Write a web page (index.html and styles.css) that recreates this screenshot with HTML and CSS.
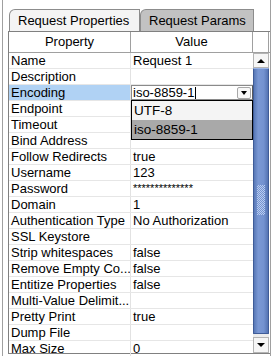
FILE: index.html
```html
<!DOCTYPE html>
<html>
  <head>
    <title>Request Properties</title>
    <link rel="stylesheet" href="styles.css">
  </head>
  <body>
    <div class="panel">
      <div class="tabs">
        <div class="tab active">Request Properties</div>
        <div class="tab">Request Params</div>
      </div>
      <div class="grid">
        <div class="head">
          <div class="hcell">Property</div>
          <div class="hcell">Value</div>
          <div class="hcell corner"></div>
        </div>
        <div class="body">
          <div class="rows">
            <div class="row"><div class="cell">Name</div><div class="cell">Request 1</div></div>
            <div class="row"><div class="cell">Description</div><div class="cell"></div></div>
            <div class="row editing">
              <div class="cell">Encoding</div>
              <div class="cell">
                <div class="combo">
                  <span class="combo-text">iso-8859-1</span><span class="caret"></span>
                  <span class="combo-btn"></span>
                </div>
                <ul class="dropdown">
                  <li>UTF-8</li>
                  <li class="selected">iso-8859-1</li>
                </ul>
              </div>
            </div>
            <div class="row"><div class="cell">Endpoint</div><div class="cell"></div></div>
            <div class="row"><div class="cell">Timeout</div><div class="cell"></div></div>
            <div class="row"><div class="cell">Bind Address</div><div class="cell"></div></div>
            <div class="row"><div class="cell">Follow Redirects</div><div class="cell">true</div></div>
            <div class="row"><div class="cell">Username</div><div class="cell">123</div></div>
            <div class="row"><div class="cell">Password</div><div class="cell pass">**************</div></div>
            <div class="row"><div class="cell">Domain</div><div class="cell">1</div></div>
            <div class="row"><div class="cell">Authentication Type</div><div class="cell">No Authorization</div></div>
            <div class="row"><div class="cell">SSL Keystore</div><div class="cell"></div></div>
            <div class="row"><div class="cell">Strip whitespaces</div><div class="cell">false</div></div>
            <div class="row"><div class="cell">Remove Empty Co...</div><div class="cell">false</div></div>
            <div class="row"><div class="cell">Entitize Properties</div><div class="cell">false</div></div>
            <div class="row"><div class="cell">Multi-Value Delimit...</div><div class="cell"></div></div>
            <div class="row"><div class="cell">Pretty Print</div><div class="cell">true</div></div>
            <div class="row"><div class="cell">Dump File</div><div class="cell"></div></div>
            <div class="row"><div class="cell">Max Size</div><div class="cell">0</div></div>
          </div>
          <div class="scrollbar">
            <div class="sbtn up"></div>
            <div class="thumb"><div class="grip"></div></div>
            <div class="track"></div>
            <div class="sbtn down"></div>
          </div>
        </div>
      </div>
    </div>
  </body>
</html>
```
FILE: styles.css
```css
* {
  box-sizing: border-box;
}
body {
  margin: 0;
  font-family: 'Liberation Sans', Arial, sans-serif;
  font-size: 13px;
  color: #000;
  background: #fff;
}
.panel {
  margin-left: 2px;
  width: 269px;
  height: 356px;
  border-left: 1px solid #a0a0a0;
  border-right: 1px solid #a0a0a0;
  padding: 9px 0 0 5px;
  overflow: hidden;
}
.tabs {
  display: flex;
  height: 22px;
  padding-left: 1px;
}
.tab {
  height: 22px;
  border: 1px solid #8c8c8c;
  border-bottom: none;
  border-top-left-radius: 6px 6px;
  padding-left: 8px;
  line-height: 21px;
  background: #c2c2c2;
  width: 114px;
}
.tab.active {
  width: 131px;
  background: #f4f4f4;
}
.grid {
  border-left: 1px solid #808080;
  border-top: 1px solid #808080;
  border-bottom: 1px solid #808080;
}
.head {
  display: grid;
  grid-template-columns: 122px 122px 16px;
  height: 21px;
  border-bottom: 1px solid #a0a0a0;
}
.hcell {
  border-right: 1px solid #a0a0a0;
  text-align: center;
  line-height: 20px;
}
.body {
  display: flex;
  height: 300px;
}
.rows {
  width: 244px;
  position: relative;
}
.row {
  display: grid;
  grid-template-columns: 122px 122px;
  height: 16px;
  border-bottom: 1px solid #e6e6e6;
}
.cell {
  position: relative;
  padding-left: 2px;
  line-height: 15px;
  white-space: nowrap;
  overflow: hidden;
}
.cell:first-child {
  border-right: 1px solid #e2e2e2;
}
.cell.pass {
  font-size: 11px;
}
.row.editing .cell {
  overflow: visible;
}
.row.editing .cell:first-child {
  background: #b0d2f4;
}
.combo {
  height: 15px;
  border: 1px solid #8a8a8a;
  border-right-color: #5a5a5a;
  margin-left: -2px;
  padding-left: 1px;
  line-height: 13px;
  background: #fff;
  display: flex;
  align-items: center;
}
.caret {
  width: 1px;
  height: 12px;
  background: #000;
  margin-left: 1px;
}
.combo-btn {
  margin-left: auto;
  margin-right: 1px;
  width: 14px;
  height: 12px;
  border: 1px solid #a8a8a8;
  border-radius: 2px;
  background: #f8f8f8;
  position: relative;
}
.combo-btn::after {
  content: '';
  position: absolute;
  left: 3px;
  top: 3px;
  border-left: 3.5px solid transparent;
  border-right: 3.5px solid transparent;
  border-top: 4px solid #000;
}
.dropdown {
  position: absolute;
  top: 15px;
  left: 0;
  width: 122px;
  margin: 0;
  padding: 0;
  list-style: none;
  border: 1px solid #000;
  font-size: 13.5px;
  z-index: 2;
}
.dropdown li {
  height: 19px;
  line-height: 19px;
  padding-left: 2px;
  background: #f4f4f4;
}
.dropdown li.selected {
  background: #a9a9a9;
}
.scrollbar {
  width: 16px;
  display: flex;
  flex-direction: column;
  background: #ececec;
}
.sbtn {
  height: 15px;
  border: 1px solid #b4b4b4;
  background: #f6f6f6;
  position: relative;
}
.sbtn.down {
  height: 16px;
}
.sbtn::after {
  content: '';
  position: absolute;
  left: 3px;
  top: 5px;
  border-left: 4px solid transparent;
  border-right: 4px solid transparent;
}
.sbtn.up::after {
  border-bottom: 4px solid #000;
}
.sbtn.down::after {
  border-top: 4px solid #000;
}
.thumb {
  height: 266px;
  border: 1px solid #3f5c98;
  border-top-color: #9ab4e6;
  border-radius: 1px;
  background: linear-gradient(to right, #5878b6, #7a98d4 30%, #7392d0 70%, #5473b2);
  display: flex;
  justify-content: center;
  padding-top: 116px;
}
.grip {
  width: 8px;
  height: 30px;
  background: conic-gradient(#b8ccf0 25%, transparent 0 50%, #b8ccf0 0 75%, transparent 0);
  background-size: 2px 2px;
}
.track {
  height: 3px;
}
```
